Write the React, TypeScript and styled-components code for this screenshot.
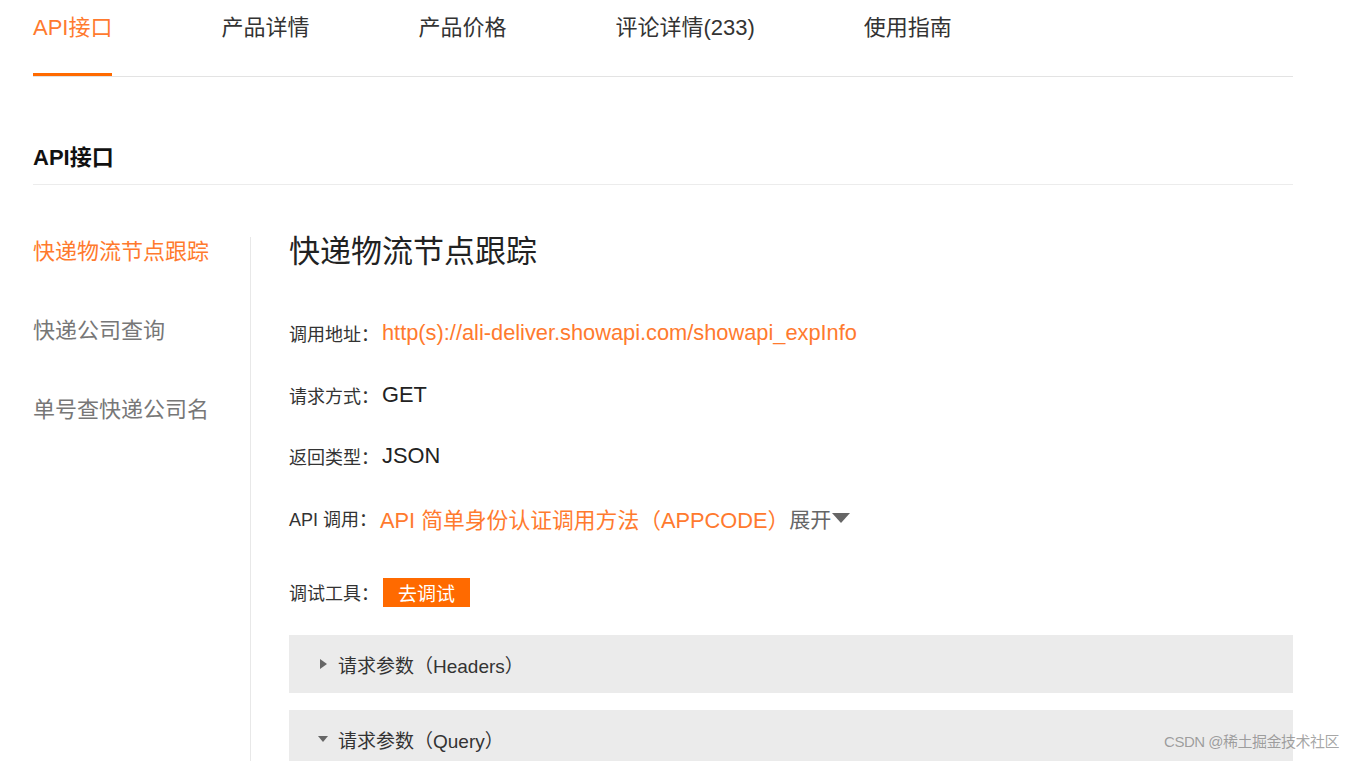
import styled, { createGlobalStyle } from "styled-components";

const GlobalStyle = createGlobalStyle`
    html, body {
        margin: 0;
        padding: 0;
        background: #ffffff;
        overflow: hidden;
    }
    body {
        font-family: "Liberation Sans", Arial, "Noto Sans CJK SC", sans-serif;
        color: #333333;
    }
`;

const ORANGE = "#ff6a00";
const ORANGE_TEXT = "#ff7a2e";

const Page = styled.div`
    position: relative;
    width: 1260px;
    height: 761px;
    padding: 0 54px 0 33px;
    overflow: hidden;
`;

const TabBar = styled.div`
    display: flex;
    height: 76px;
    border-bottom: 1px solid #e3e3e3;
`;

const Tab = styled.div<{ $active?: boolean }>`
    box-sizing: border-box;
    height: 76px;
    padding-top: 15px;
    margin-right: 109px;
    font-size: 22px;
    line-height: 26px;
    color: ${(p) => (p.$active ? ORANGE_TEXT : "#333333")};
    border-bottom: 3px solid ${(p) => (p.$active ? ORANGE : "transparent")};
`;

const SectionTitle = styled.div`
    margin-top: 64px;
    padding-bottom: 9px;
    font-size: 22px;
    line-height: 34px;
    font-weight: bold;
    color: #111111;
    border-bottom: 1px solid #ececec;
`;

const Body = styled.div`
    display: flex;
    margin-top: 52px;
`;

const SideNav = styled.div`
    width: 217px;
    height: 600px;
    border-right: 1px solid #e8e8e8;
    display: flex;
    flex-direction: column;
    gap: 49px;
`;

const NavItem = styled.div<{ $active?: boolean }>`
    font-size: 22px;
    line-height: 30px;
    color: ${(p) => (p.$active ? ORANGE_TEXT : "#777777")};
`;

const Content = styled.div`
    flex: 1;
    padding-left: 38px;
`;

const ApiTitle = styled.div`
    font-size: 31px;
    line-height: 30px;
    color: #222222;
    margin-bottom: 21px;
`;

const InfoRow = styled.div<{ $gap?: number }>`
    display: flex;
    align-items: center;
    height: 30px;
    margin-top: ${(p) => p.$gap ?? 32}px;
`;

const Label = styled.span`
    font-size: 18px;
    color: #333333;
    margin-right: 3px;
`;

const Value = styled.span<{ $tone?: "orange" | "dark" | "gray" }>`
    font-size: 21.8px;
    color: ${(p) =>
        p.$tone === "orange" ? ORANGE_TEXT : p.$tone === "gray" ? "#666666" : "#222222"};
    white-space: pre;
`;

const Expand = styled.span`
    display: inline-flex;
    align-items: center;
    font-size: 21px;
    color: #666666;
`;

const DebugButton = styled.span`
    display: inline-flex;
    align-items: center;
    justify-content: center;
    width: 87px;
    height: 29px;
    margin-left: 1px;
    background: ${ORANGE};
    color: #ffffff;
    font-size: 19px;
`;

const Panel = styled.div<{ $gap: number }>`
    display: flex;
    align-items: center;
    height: 58px;
    margin-top: ${(p) => p.$gap}px;
    padding-left: 28px;
    background: #ebebeb;
    font-size: 19px;
    color: #333333;
`;

const Caret = styled.svg`
    width: 12px;
    height: 12px;
    margin-right: 9px;
`;

const Watermark = styled.div`
    position: absolute;
    right: 8px;
    bottom: 10px;
    font-size: 15px;
    color: rgba(90, 90, 90, 0.55);
    letter-spacing: -0.5px;
`;

const App = () => (
    <Page>
        <GlobalStyle />
        <TabBar>
            <Tab $active>API接口</Tab>
            <Tab>产品详情</Tab>
            <Tab>产品价格</Tab>
            <Tab>评论详情(233)</Tab>
            <Tab>使用指南</Tab>
        </TabBar>
        <SectionTitle>API接口</SectionTitle>
        <Body>
            <SideNav>
                <NavItem $active>快递物流节点跟踪</NavItem>
                <NavItem>快递公司查询</NavItem>
                <NavItem>单号查快递公司名</NavItem>
            </SideNav>
            <Content>
                <ApiTitle>快递物流节点跟踪</ApiTitle>
                <InfoRow $gap={51}>
                    <Label>调用地址：</Label>
                    <Value $tone="orange">http(s)://ali-deliver.showapi.com/showapi_expInfo</Value>
                </InfoRow>
                <InfoRow>
                    <Label>请求方式：</Label>
                    <Value>GET</Value>
                </InfoRow>
                <InfoRow $gap={31}>
                    <Label>返回类型：</Label>
                    <Value>JSON</Value>
                </InfoRow>
                <InfoRow>
                    <Label>API 调用：</Label>
                    <Value $tone="orange">API 简单身份认证调用方法（APPCODE）</Value>
                    <Expand>
                        展开
                        <svg width="20" height="12" viewBox="0 0 20 12">
                            <path d="M1 1 L19 1 L10 11 Z" fill="#666666" />
                        </svg>
                    </Expand>
                </InfoRow>
                <InfoRow $gap={44}>
                    <Label>调试工具：</Label>
                    <DebugButton>去调试</DebugButton>
                </InfoRow>
                <Panel $gap={28}>
                    <Caret viewBox="0 0 12 12">
                        <path d="M3 1 L10 6 L3 11 Z" fill="#666666" />
                    </Caret>
                    请求参数（Headers）
                </Panel>
                <Panel $gap={17}>
                    <Caret viewBox="0 0 12 12">
                        <path d="M1 3 L11 3 L6 9 Z" fill="#666666" />
                    </Caret>
                    请求参数（Query）
                </Panel>
            </Content>
        </Body>
        <Watermark>CSDN @稀土掘金技术社区</Watermark>
    </Page>
);

export default App;
